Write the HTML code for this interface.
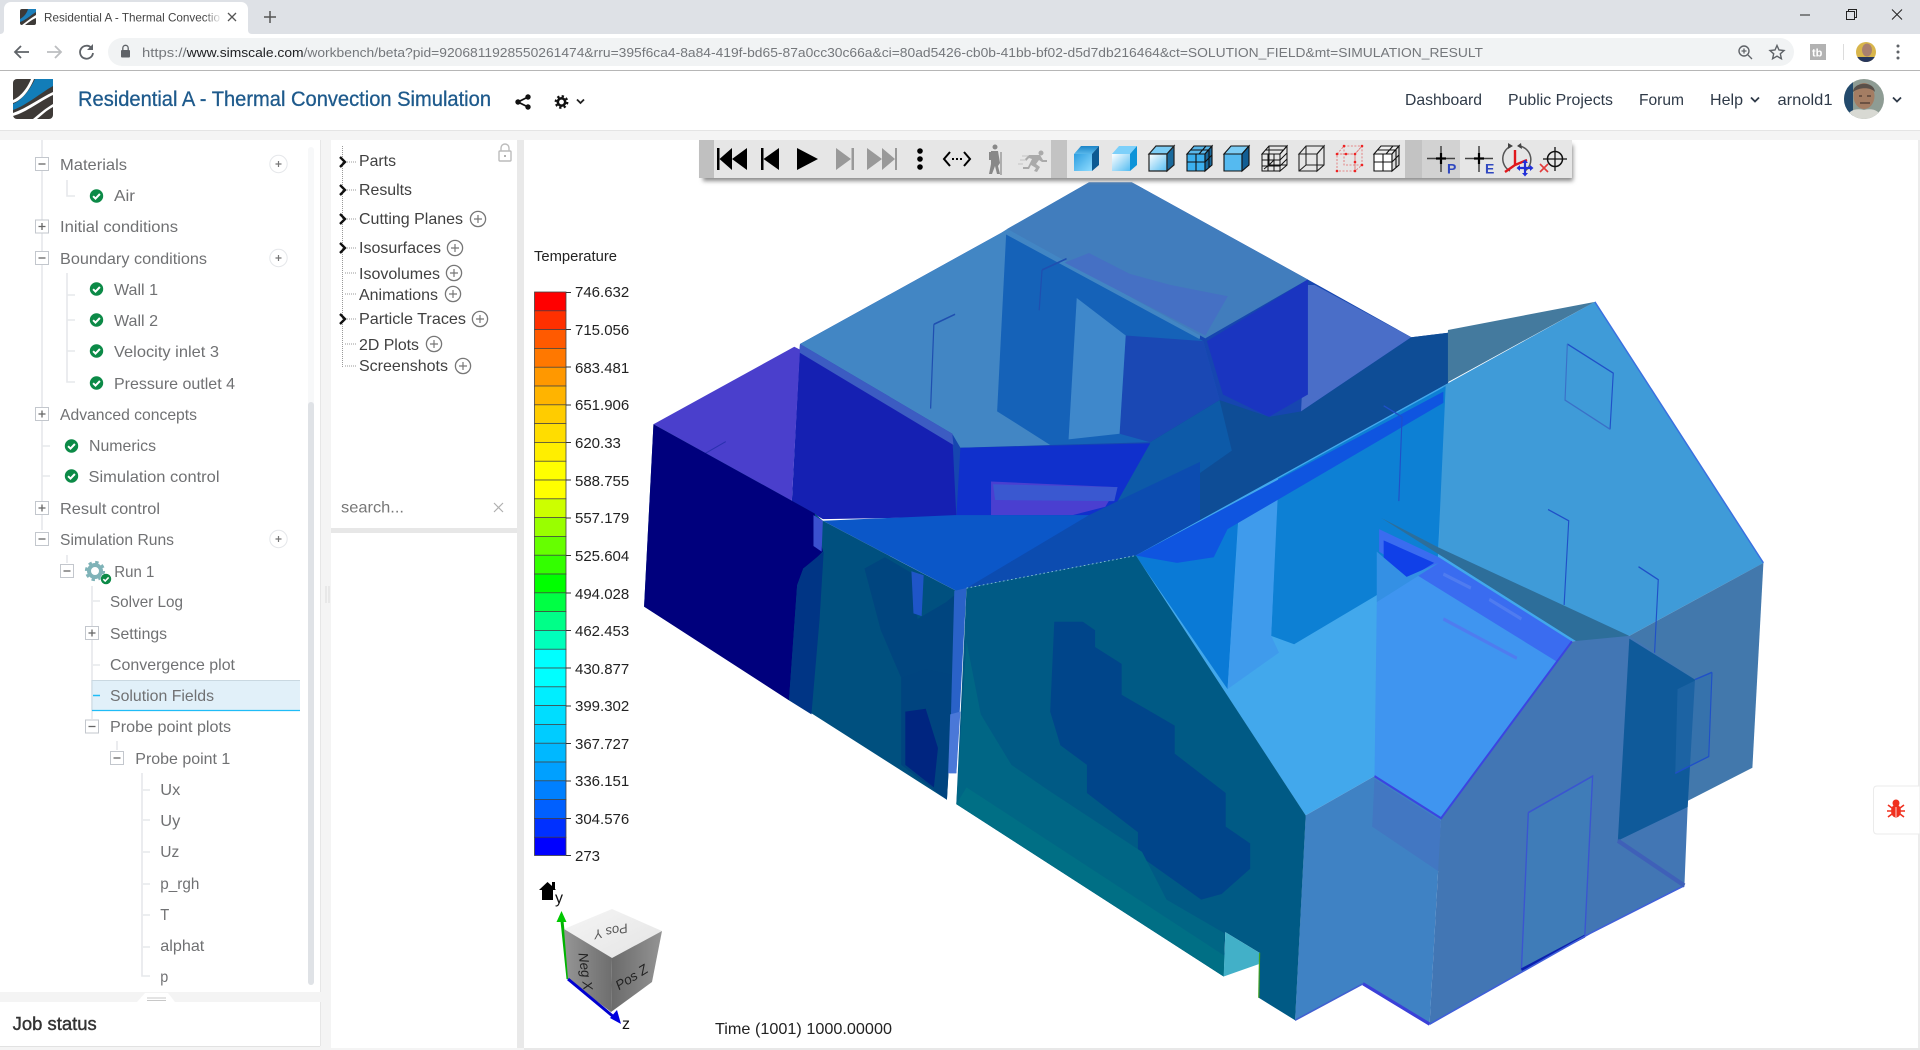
<!DOCTYPE html>
<html lang="en"><head><meta charset="utf-8"><title>Residential A - Thermal Convection Simulation</title>
<style>html,body{margin:0;padding:0;background:#f4f4f4;overflow:hidden}svg{display:block}
text{font-family:"Liberation Sans",Arial,sans-serif}
.t{font-size:16px;fill:#707173}.m{font-size:16px;fill:#404040}.l{font-size:15px;fill:#222}.n{font-size:16px;fill:#2f3a48}
</style></head><body>
<svg width="1920" height="1050" viewBox="0 0 1920 1050" xmlns="http://www.w3.org/2000/svg">
<defs>
<g id="chk"><circle r="6.7" fill="#0c8a47"/><path d="M-3.4 0.2L-1 2.6L3.4-2" fill="none" stroke="#fff" stroke-width="2"/></g>
<g id="bm"><rect x="-6.5" y="-6.5" width="13" height="13" fill="#fff" stroke="#c3c7cd"/><path d="M-3.5 0H3.5" stroke="#666" stroke-width="1.3"/></g>
<g id="bp"><rect x="-6.5" y="-6.5" width="13" height="13" fill="#fff" stroke="#c3c7cd"/><path d="M-3.5 0H3.5M0-3.5V3.5" stroke="#666" stroke-width="1.3"/></g>
<g id="add"><circle r="8.7" fill="#fff" stroke="#e5e7ea"/><path d="M-3 0H3M0-3V3" stroke="#777" stroke-width="1.2"/></g>
<g id="pl"><circle r="7.6" fill="#fff" stroke="#777" stroke-width="1.3"/><path d="M-4 0H4M0-4V4" stroke="#777" stroke-width="1.2"/></g>
<path id="chev" d="M-3-5L2 0L-3 5" fill="none" stroke="#111" stroke-width="2.4"/>
<linearGradient id="cb" x1="0" y1="0" x2="1" y2="1"><stop offset="0" stop-color="#2d9ee0"/><stop offset="1" stop-color="#8fdcff"/></linearGradient>
<linearGradient id="cw" x1="0" y1="0" x2="1" y2="1"><stop offset="0" stop-color="#fff"/><stop offset="1" stop-color="#55bdf2"/></linearGradient>
<linearGradient id="top" x1="0" y1="0" x2="0" y2="1"><stop offset="0" stop-color="#1c85c8"/><stop offset="1" stop-color="#59b8ea"/></linearGradient>
<linearGradient id="fade" x1="0" x2="1"><stop offset="0" stop-color="#fff" stop-opacity="0"/><stop offset="1" stop-color="#fff"/></linearGradient>
<linearGradient id="ctop" x1="0" y1="0" x2="1" y2="1"><stop offset="0" stop-color="#f5f5f5"/><stop offset="1" stop-color="#e4e4e4"/></linearGradient>
<linearGradient id="cl" x1="0" y1="0" x2="1" y2="0"><stop offset="0" stop-color="#959595"/><stop offset="1" stop-color="#6e6e6e"/></linearGradient>
<linearGradient id="cr" x1="0" y1="0" x2="1" y2="0"><stop offset="0" stop-color="#6a6a6a"/><stop offset="1" stop-color="#949494"/></linearGradient>
<filter id="bl" x="-5%" y="-30%" width="110%" height="160%"><feGaussianBlur stdDeviation="2"/></filter>
<clipPath id="av"><circle cx="1864" cy="99" r="20"/></clipPath>
<clipPath id="av2"><circle cx="1866" cy="52" r="10"/></clipPath>
</defs>

<rect width="1920" height="1050" fill="#f4f4f4"/>
<!-- browser chrome -->
<rect width="1920" height="34" fill="#dee1e6"/>
<path d="M0 34C3 34 4 32 4 30V9C4 5 7 2 11 2H241C245 2 248 5 248 9V30C248 32 249 34 252 34Z" fill="#fff"/>
<rect y="34" width="1920" height="36" fill="#fff"/>
<rect y="70" width="1920" height="1" fill="#b6b6b6"/>
<rect x="20" y="9" width="16" height="16" rx="2" fill="#3d3a38"/><path d="M28 9H36V12C31 15 26 20 20 22V19C24 17 27 13 28 9Z" fill="#1c7fbb"/><path d="M36 15C31 18 26 22 22 25H25C29 22 33 19 36 18Z" fill="#fff"/>
<text x="44" y="21.5" font-size="12" fill="#444" textLength="176" lengthAdjust="spacingAndGlyphs">Residential A - Thermal Convectio</text>
<rect x="204" y="8" width="18" height="18" fill="url(#fade)"/>
<path d="M228 13L236 21M236 13L228 21" stroke="#555" stroke-width="1.3"/>
<path d="M264 17H276M270 11V23" stroke="#555" stroke-width="1.5"/>
<path d="M15 52H29M21 46L15 52L21 58" fill="none" stroke="#5f6368" stroke-width="1.8"/>
<path d="M47 52H61M55 46L61 52L55 58" fill="none" stroke="#bcbec0" stroke-width="1.8"/>
<path d="M91.500 48A6.500 6.500 0 1 0 93 53" fill="none" stroke="#5f6368" stroke-width="1.8"/><path d="M93 44V50H87Z" fill="#5f6368"/>
<rect x="108" y="38" width="1686" height="28" rx="14" fill="#f1f3f4"/>
<rect x="121" y="50" width="9" height="7.500" rx="1" fill="#5f6368"/><path d="M122.800 50V48A2.700 2.700 0 0 1 128.200 48V50" fill="none" stroke="#5f6368" stroke-width="1.300"/>
<text x="142" y="57" font-size="13" fill="#74777b" textLength="44.600" lengthAdjust="spacingAndGlyphs">https://</text>
<text x="186.600" y="57" font-size="13" fill="#202124" textLength="117" lengthAdjust="spacingAndGlyphs">www.simscale.com</text>
<text x="303.500" y="57" font-size="13" fill="#74777b" textLength="1179.500" lengthAdjust="spacingAndGlyphs">/workbench/beta?pid=9206811928550261474&amp;rru=395f6ca4-8a84-419f-bd65-87a0cc30c66a&amp;ci=80ad5426-cb0b-41bb-bf02-d5d7db216464&amp;ct=SOLUTION_FIELD&amp;mt=SIMULATION_RESULT</text>
<circle cx="1744" cy="51" r="5" fill="none" stroke="#5f6368" stroke-width="1.400"/><path d="M1748 55L1752 59M1741.500 51H1746.500M1744 48.500V53.500" stroke="#5f6368" stroke-width="1.300"/>
<path d="M1777 45.500L1779 50L1784 50.500L1780.300 53.800L1781.400 58.700L1777 56.200L1772.600 58.700L1773.700 53.800L1770 50.500L1775 50Z" fill="none" stroke="#5f6368" stroke-width="1.400"/>
<rect x="1810" y="44" width="16" height="16" fill="#b2b2b2"/><text x="1812" y="56.500" font-size="11" font-weight="bold" style="fill:#fff">tb</text>
<rect x="1843" y="44" width="1" height="16" fill="#dcdcdc"/>
<circle cx="1866" cy="52" r="10" fill="#d8b54b"/><g clip-path="url(#av2)"><ellipse cx="1867" cy="50" rx="5" ry="6.500" fill="#a98070"/><rect x="1857" y="57" width="20" height="6" fill="#26365c"/></g>
<circle cx="1898" cy="46" r="1.500" fill="#5f6368"/><circle cx="1898" cy="52" r="1.500" fill="#5f6368"/><circle cx="1898" cy="58" r="1.500" fill="#5f6368"/>
<path d="M1800 15H1810" stroke="#222" stroke-width="1"/>
<path d="M1846.500 11.500H1854.500V19.500H1846.500ZM1848.500 11.500V9.500H1856.500V17.500H1854.500" fill="none" stroke="#222"/>
<path d="M1892 9.500L1902 19.500M1902 9.500L1892 19.500" stroke="#222" stroke-width="1"/>

<!-- app header -->
<rect y="71" width="1920" height="59" fill="#fff"/><rect y="130" width="1920" height="1" fill="#e4e4e4"/>
<rect x="13" y="79" width="40" height="40" rx="4" fill="#3e3a37"/>
<path d="M35 79H53V86C42 92 27 105 13 110V104C22 100 30 90 35 79Z" fill="#127db8"/>
<path d="M31 79H34C29 91 22 100 13 103V100C20 97 27 89 31 79Z" fill="#fff"/>
<path d="M53 92V95C40 101 27 112 13 116V113C27 108 40 98 53 92Z" fill="#fff"/>
<path d="M53 104V107C47 110 42 115 37 119H33C39 114 46 108 53 104Z" fill="#fff"/>
<text x="78" y="106" font-size="21" fill="#1e5a8c" stroke="#1e5a8c" stroke-width=".3" textLength="413" lengthAdjust="spacingAndGlyphs">Residential A - Thermal Convection Simulation</text>
<path d="M528 97L518 102L528 107" fill="none" stroke="#111" stroke-width="1.800"/><circle cx="528" cy="97" r="2.700" fill="#111"/><circle cx="518" cy="102" r="2.700" fill="#111"/><circle cx="528" cy="107" r="2.700" fill="#111"/>
<g transform="translate(561.500 102)"><circle r="3.700" fill="none" stroke="#111" stroke-width="2.600"/><circle r="5.800" fill="none" stroke="#111" stroke-width="2.200" stroke-dasharray="2.300 2.250"/></g>
<path d="M577 99.500L580.500 103L584 99.500" fill="none" stroke="#222" stroke-width="1.800"/>
<text class="n" x="1405" y="105" textLength="77" lengthAdjust="spacingAndGlyphs">Dashboard</text>
<text class="n" x="1508" y="105" textLength="105" lengthAdjust="spacingAndGlyphs">Public Projects</text>
<text class="n" x="1639" y="105" textLength="45" lengthAdjust="spacingAndGlyphs">Forum</text>
<text class="n" x="1710" y="105" textLength="33" lengthAdjust="spacingAndGlyphs">Help</text>
<path d="M1751 97.500L1755 101.500L1759 97.500" fill="none" stroke="#2f3a48" stroke-width="1.800"/>
<text class="n" x="1777.500" y="105" textLength="55" lengthAdjust="spacingAndGlyphs">arnold1</text>
<circle cx="1864" cy="99" r="20" fill="#8e9c94"/>
<g clip-path="url(#av)"><rect x="1844" y="79" width="9" height="40" fill="#234a6c"/><ellipse cx="1864" cy="96" rx="10.500" ry="13" fill="#a47d63"/><path d="M1853 92C1853 82 1874 80 1875 92C1871 87 1859 87 1853 92Z" fill="#59504a"/><path d="M1859 96H1862M1867 96H1871M1860 103H1870" stroke="#4a3a30" stroke-width="1.300"/><path d="M1846 119C1848 110 1856 108 1864 110C1872 108 1880 110 1882 119Z" fill="#d8d9d3"/></g>
<path d="M1893 97.500L1897 101.500L1901 97.500" fill="none" stroke="#2f3a48" stroke-width="1.800"/>

<!-- left panel -->
<rect x="0" y="140" width="320" height="852" fill="#fff"/><rect x="320" y="140" width="1" height="852" fill="#e6e6e6"/>
<rect x="308" y="147" width="6" height="838" rx="3" fill="#f7f8f9"/><rect x="308" y="402" width="6" height="583" rx="3" fill="#dfe2e6"/>
<g stroke="#e6e8eb" stroke-width="1.600" fill="none">
<path d="M42 140V530"/><path d="M67 180V196H75"/><path d="M67 273V382H75M67 295H75M67 320H75M67 351H75"/>
<path d="M42 446H50M42 476H50"/><path d="M67 555V563"/><path d="M92 586V719M93 601H100M93 665H100"/>
<path d="M117 741V750"/><path d="M142 773V976H150M143 790H150M143 820H150M143 852H150M143 884H150M143 915H150M143 947H150"/>
</g>
<rect x="92" y="680" width="208" height="31" fill="#e1f0f9"/><path d="M92 680.500H300" stroke="#c9d8e1"/><path d="M92 680V711" stroke="#c9d8e1"/><path d="M92 710.500H300" stroke="#1fbcf7" stroke-width="1.200"/><path d="M93 695.500H100" stroke="#1fbcf7" stroke-width="1.500"/>
<use href="#bm" x="42" y="164"/><use href="#bp" x="42" y="226.500"/><use href="#bm" x="42" y="258"/><use href="#bp" x="42" y="414"/><use href="#bp" x="42" y="508"/><use href="#bm" x="42" y="539"/><use href="#bm" x="67" y="571"/><use href="#bp" x="92" y="633"/><use href="#bm" x="92" y="726.500"/><use href="#bm" x="117" y="758"/>
<use href="#add" x="278.500" y="164"/><use href="#add" x="278.500" y="258"/><use href="#add" x="278.500" y="539"/>
<use href="#chk" x="96.500" y="196"/><use href="#chk" x="96.500" y="289"/><use href="#chk" x="96.500" y="320"/><use href="#chk" x="96.500" y="351"/><use href="#chk" x="96.500" y="383"/><use href="#chk" x="71.500" y="446"/><use href="#chk" x="71.500" y="476"/>
<g transform="translate(95 571)"><circle r="6" fill="none" stroke="#7fb3b8" stroke-width="4"/><circle r="8.800" fill="none" stroke="#7fb3b8" stroke-width="2.600" stroke-dasharray="3.400 3.500"/></g>
<g transform="translate(106 579) scale(.78)"><circle r="7" fill="#fff"/><use href="#chk"/></g>
<text class="t" x="60" y="170" textLength="67" lengthAdjust="spacingAndGlyphs">Materials</text>
<text class="t" x="114" y="201" textLength="21" lengthAdjust="spacingAndGlyphs">Air</text>
<text class="t" x="60" y="232" textLength="118" lengthAdjust="spacingAndGlyphs">Initial conditions</text>
<text class="t" x="60" y="264" textLength="147" lengthAdjust="spacingAndGlyphs">Boundary conditions</text>
<text class="t" x="114" y="295" textLength="44" lengthAdjust="spacingAndGlyphs">Wall 1</text>
<text class="t" x="114" y="326" textLength="44" lengthAdjust="spacingAndGlyphs">Wall 2</text>
<text class="t" x="114" y="357" textLength="105" lengthAdjust="spacingAndGlyphs">Velocity inlet 3</text>
<text class="t" x="114" y="389" textLength="121" lengthAdjust="spacingAndGlyphs">Pressure outlet 4</text>
<text class="t" x="60" y="420" textLength="137" lengthAdjust="spacingAndGlyphs">Advanced concepts</text>
<text class="t" x="89" y="451" textLength="67" lengthAdjust="spacingAndGlyphs">Numerics</text>
<text class="t" x="88.500" y="482" textLength="131" lengthAdjust="spacingAndGlyphs">Simulation control</text>
<text class="t" x="60" y="514" textLength="100" lengthAdjust="spacingAndGlyphs">Result control</text>
<text class="t" x="60" y="545" textLength="114" lengthAdjust="spacingAndGlyphs">Simulation Runs</text>
<text class="t" x="114.300" y="577" textLength="40" lengthAdjust="spacingAndGlyphs">Run 1</text>
<text class="t" x="110" y="607" textLength="73" lengthAdjust="spacingAndGlyphs">Solver Log</text>
<text class="t" x="110" y="639" textLength="57" lengthAdjust="spacingAndGlyphs">Settings</text>
<text class="t" x="110" y="670" textLength="125" lengthAdjust="spacingAndGlyphs">Convergence plot</text>
<text class="t" x="110" y="701" textLength="104" lengthAdjust="spacingAndGlyphs">Solution Fields</text>
<text class="t" x="110" y="732" textLength="121" lengthAdjust="spacingAndGlyphs">Probe point plots</text>
<text class="t" x="135.300" y="764" textLength="95" lengthAdjust="spacingAndGlyphs">Probe point 1</text>
<text class="t" x="160.300" y="795" textLength="20" lengthAdjust="spacingAndGlyphs">Ux</text>
<text class="t" x="160.300" y="826" textLength="20" lengthAdjust="spacingAndGlyphs">Uy</text>
<text class="t" x="160.300" y="857" textLength="19" lengthAdjust="spacingAndGlyphs">Uz</text>
<text class="t" x="160.300" y="889" textLength="39" lengthAdjust="spacingAndGlyphs">p_rgh</text>
<text class="t" x="160.300" y="920" textLength="9" lengthAdjust="spacingAndGlyphs">T</text>
<text class="t" x="160.300" y="951" textLength="44" lengthAdjust="spacingAndGlyphs">alphat</text>
<text class="t" x="160.300" y="982" textLength="8" lengthAdjust="spacingAndGlyphs">p</text>
<path d="M137 1002L145 993H168L175 1002Z" fill="#fff"/><path d="M147 998H166M147 1000.500H166" stroke="#c8c8c8"/>
<rect x="0" y="1002" width="320" height="44" fill="#fff"/><rect x="320" y="1002" width="1" height="44" fill="#e6e6e6"/><rect y="1046" width="320" height="1" fill="#e2e2e2"/>
<text x="12.700" y="1030" font-size="18" fill="#333" stroke="#333" stroke-width=".4" textLength="84" lengthAdjust="spacingAndGlyphs">Job status</text>
<path d="M326 586V603M329 586V603" stroke="#dcdcdc"/>

<!-- middle panel -->
<rect x="331" y="140" width="186" height="388" fill="#fff"/><rect x="331" y="528" width="186" height="5" fill="#e7e7e7"/><rect x="331" y="533" width="186" height="515" fill="#fff"/>
<rect x="517" y="140" width="7" height="908" fill="#e9e9e9"/>
<path d="M342.500 146V367M345 162H356M345 190H356M345 219H356M345 248H356M345 273H356M345 294H356M345 319H356M345 344H356M345 366H356" stroke="#999" stroke-dasharray="1 1" fill="none"/>
<use href="#chev" x="343" y="162"/><use href="#chev" x="343" y="190"/><use href="#chev" x="343" y="219"/><use href="#chev" x="343" y="248"/><use href="#chev" x="343" y="319"/>
<text class="m" x="359" y="166" textLength="37" lengthAdjust="spacingAndGlyphs">Parts</text>
<text class="m" x="359" y="195" textLength="53" lengthAdjust="spacingAndGlyphs">Results</text>
<text class="m" x="359" y="224" textLength="104" lengthAdjust="spacingAndGlyphs">Cutting Planes</text>
<text class="m" x="359" y="253" textLength="82" lengthAdjust="spacingAndGlyphs">Isosurfaces</text>
<text class="m" x="359" y="279" textLength="81" lengthAdjust="spacingAndGlyphs">Isovolumes</text>
<text class="m" x="359" y="300" textLength="79" lengthAdjust="spacingAndGlyphs">Animations</text>
<text class="m" x="359" y="324" textLength="107" lengthAdjust="spacingAndGlyphs">Particle Traces</text>
<text class="m" x="359" y="350" textLength="60" lengthAdjust="spacingAndGlyphs">2D Plots</text>
<text class="m" x="359" y="371" textLength="89" lengthAdjust="spacingAndGlyphs">Screenshots</text>
<use href="#pl" x="478" y="219"/><use href="#pl" x="455" y="248"/><use href="#pl" x="454" y="273"/><use href="#pl" x="453" y="294"/><use href="#pl" x="480" y="319"/><use href="#pl" x="434" y="344"/><use href="#pl" x="463" y="366"/>
<rect x="499" y="151" width="12" height="10" rx="1" fill="none" stroke="#bcbcbc" stroke-width="1.400"/><path d="M501 151V148A4 4 0 0 1 509 148V151" fill="none" stroke="#bcbcbc" stroke-width="1.400"/><circle cx="505" cy="156" r="1" fill="#999"/>
<text x="341" y="512.500" font-size="16" fill="#777" textLength="63" lengthAdjust="spacingAndGlyphs">search...</text>
<path d="M494 503L503 512M503 503L494 512" stroke="#b0b0b0" stroke-width="1.200"/>

<!-- canvas -->
<rect x="524" y="140" width="1394" height="908" fill="#fff"/><rect x="1918" y="140" width="2" height="910" fill="#ececec"/><rect x="524" y="1048" width="1396" height="2" fill="#e8e8e8"/>

<!-- 3D model -->
<g transform="translate(640 170) scale(.40816 .56122)">
<polygon points="392,310 885,112 1100,22 1205,22 1636,195 1890,298 1980,290 1980,380 1215,687 800,745 770,620 765,470" fill="#1646b0"/>
<polygon points="392,310 885,112 900,105 1100,22 1205,22 1372,90 1372,300 1005,490 785,495 765,470" fill="#4286c4"/>
<polygon points="897,115 1380,305 1420,410 1250,485 1005,490 875,430" fill="#1562b8"/>
<polygon points="1190,295 1380,305 1420,410 1250,485 1175,470" fill="#1a48b4"/>
<polygon points="1070,228 1190,295 1175,470 1050,480" fill="#3f88cb"/>
<polygon points="900,105 1100,22 1205,22 1636,195 1385,300" fill="#417dbd"/>
<polygon points="1040,165 1100,148 1200,185 1300,205 1440,225 1385,295" fill="#4570c4"/>
<path d="M985 178L1045 158M985 178L978 250M720 275L772 257M720 275L712 425" stroke="#1f4fb0" stroke-width="3" fill="none"/>
<g transform="translate(1372 0) scale(1.125 1)">
<polygon points="235,205 250,205 460,298 220,430" fill="#4a6ec8"/>
<polygon points="15,305 235,195 235,400 150,440 50,400" fill="#1a35c0"/>
</g>
<polygon points="1980,290 1890,298 1620,430 1541,440 1420,410 1250,485 1170,590 800,745 1215,687 1372,625 1980,380" fill="#0e4d96"/>
<polygon points="1250,485 1420,410 1450,500 1372,540 1170,590" fill="#0d5aa8"/>
<polygon points="1100,615 1170,590 1372,520 1372,625 1215,687 800,745" fill="#0c4cb0"/>
<polygon points="785,495 1250,487 1170,590 1100,615 775,618" fill="#1030cc"/>
<polygon points="860,555 1170,565 1140,600 1060,615 860,615" fill="#4a3fd0"/>
<polygon points="865,560 1170,565 1162,590 870,588" fill="#3a58d0"/>
<polygon points="392,310 765,470 775,618 448,622 372,590" fill="#1520b2"/>
<polygon points="392,310 765,470 768,490 390,325" fill="#3c5cc2"/>
<polygon points="33,453 378,315 392,320 372,590" fill="#4a3fcc"/>
<path d="M160 505L210 484" stroke="#2a30b0" stroke-width="2"/>
<polygon points="448,625 770,615 1100,615 800,745 780,752" fill="#0b57c8"/>
<g transform="translate(1372 0) scale(1.125 1)">
<polygon points="-140,687 540,380 860,235 1227,700 930,830 810,840 525,1155 380,1080 230,1150" fill="#42a8ec"/>
<polygon points="530,385 860,235 1227,700 935,830 520,680" fill="#3f9bd8"/>
<polygon points="540,285 860,235 540,378" fill="#447a9e"/>
<polygon points="170,550 535,385 518,690 380,760 205,845 155,830" fill="#0d80d4"/>
<polygon points="-140,687 85,600 60,925" fill="#0a7ad6"/>
<polygon points="85,610 170,570 155,830 172,860 60,925" fill="#3f9bec"/>
<polygon points="-140,687 530,395 530,415 60,640 30,690 -50,700" fill="#0f55e0"/>
<polygon points="385,770 520,690 810,840 525,1155 380,1080" fill="#3f95f0"/>
<polygon points="390,640 520,690 810,840 785,880 390,680" fill="#3a6cf0"/>
<polygon points="400,660 510,700 450,730 400,700" fill="#1040e8"/>
<polygon points="385,680 450,725 520,700 385,770" fill="#3490e4"/>
<path d="M530 800L690 870M630 765L700 800M530 720L590 745" stroke="#4f7cf0" stroke-width="6" fill="none"/>
<polygon points="395,620 518,672 935,830 935,880 820,840" fill="#2d6e9a"/>
<polygon points="935,830 1227,700 1203,1065 1060,1125" fill="#4278ac"/>
<polygon points="230,1150 380,1080 525,1155 500,1522 355,1450 207,1515" fill="#3f82c4"/>
<polygon points="380,1085 525,1160 520,1250 375,1170" fill="#4277c2"/>
<polygon points="525,1155 810,840 935,830 1078,908 1062,1135 1055,1275 850,1360 500,1522" fill="#4276b4"/>
<polygon points="715,1145 855,1080 838,1365 700,1425" fill="#3f7cb8"/>
<polygon points="935,835 1078,908 1062,1135 910,1195" fill="#0f5a9a"/>
<polygon points="1040,925 1115,895 1108,1045 1035,1075" fill="#2a6cac" opacity=".5"/>
<path d="M715 1145L855 1080L838 1365M715 1145L700 1425" stroke="#3a55d0" stroke-width="3" fill="none"/>
<path d="M700 1425L838 1365" stroke="#0a20b0" stroke-width="5"/>
<path d="M355 1450L500 1522" stroke="#3a40d8" stroke-width="6"/>
<path d="M500 1522L850 1360L1055 1275" stroke="#3f5fd8" stroke-width="3" fill="none"/>
<path d="M207 1515L355 1450" stroke="#4060d0" stroke-width="3"/>
<path d="M860 235L1227 700" stroke="#3a70e0" stroke-width="3"/>
<path d="M380 1080L525 1155L810 840" stroke="#3b45e0" stroke-width="4" fill="none"/>
<path d="M800 310L900 362L893 462M955 707L998 730L990 860M758 605L803 625L793 775M1115 895L1108 1045L1035 1075M1115 895L1078 908M400 420L440 440L433 590" stroke="#1f50c8" stroke-width="2.500" fill="none"/>
<path d="M800 310L795 410L893 462" stroke="#3a70c8" stroke-width="2.500" fill="none"/>
<path d="M910 1195L1055 1275" stroke="#3f60b8" stroke-width="8"/>
</g>
<polygon points="33,453 428,612 448,625 670,710 780,752 752,1122 10,778" fill="#00507f"/>
<polygon points="33,453 428,612 448,680 420,700 400,710 385,740 365,945 10,778" fill="#00007d"/>
<polygon points="385,740 400,710 450,680 440,800 420,970 365,945" fill="#003585"/>
<polygon points="550,710 600,690 670,720 680,800 750,770 780,752 770,900 640,905 590,820" fill="#00457f"/>
<polygon points="640,905 700,890 770,900 752,1122 640,1060" fill="#00447f"/>
<polygon points="650,965 700,960 730,1030 720,1100 650,1060" fill="#002580"/>
<polygon points="665,715 695,722 690,795 670,790" fill="#1f55c8"/>
<polygon points="425,615 448,625 445,680 425,670" fill="#3a50d0"/>
<polygon points="770,750 800,745 775,1075 758,1075" fill="#2a62c8"/>
<polygon points="760,970 785,965 775,1075 755,1075" fill="#4a78d8"/>
<polygon points="800,745 1215,687 1631,1150 1605,1515 1516,1475 1518,1395 1434,1358 1430,1437 775,1130" fill="#005a85"/>
<polygon points="1015,805 1085,805 1115,820 1115,850 1180,880 1180,935 1310,990 1310,1040 1435,1110 1435,1170 1495,1200 1495,1245 1425,1290 1375,1300 1220,1220 1220,1180 1095,1110 1095,1060 1030,1025 1005,965" fill="#00458a"/>
<polygon points="775,1130 800,840 835,970 910,1060 1000,1105 1230,1215 1290,1300 1432,1360 1430,1437" fill="#006685"/>
<polygon points="775,1130 800,1100 1432,1400 1430,1437" fill="#006f85"/>
<polygon points="1434,1358 1518,1395 1516,1415 1430,1437" fill="#42b0c8"/>
<path d="M1518 1395L1516 1475" stroke="#40a020" stroke-width="3"/>
<path d="M800 745L1215 687" stroke="#8fc9d8" stroke-width="1.500" stroke-dasharray="4 6"/>
</g>

<!-- toolbar -->
<rect x="703" y="145" width="870" height="36" fill="#8a8a8a" filter="url(#bl)"/>
<rect x="699" y="140" width="16" height="38" fill="#c0c0c0"/><rect x="714" y="140" width="337" height="38" fill="#e6e6e6"/>
<rect x="1051" y="140" width="16" height="38" fill="#c3c3c3"/><rect x="1067" y="140" width="338" height="38" fill="#e6e6e6"/>
<rect x="1405" y="140" width="17" height="38" fill="#c3c3c3"/><rect x="1422" y="140" width="38" height="38" fill="#d2d2d2"/><rect x="1460" y="140" width="112" height="38" fill="#e6e6e6"/>
<path d="M717 148H719.500V170H717ZM732 148V170L719.500 159ZM747 148V170L732 159Z" fill="#000"/>
<path d="M761 148H763.500V170H761ZM779 148V170L763.500 159Z" fill="#000"/>
<path d="M797 148V170L818 159Z" fill="#000"/>
<path d="M836 148V170L851 159ZM851.500 148H854V170H851.500Z" fill="#999"/>
<path d="M867 148V170L882 159ZM882 148V170L895 159ZM895 148H897V170H895Z" fill="#999"/>
<circle cx="920" cy="151" r="2.800" fill="#000"/><circle cx="920" cy="159" r="2.800" fill="#000"/><circle cx="920" cy="167" r="2.800" fill="#000"/>
<path d="M950 152L944 159L950 166M964 152L970 159L964 166" fill="none" stroke="#000" stroke-width="2"/><path d="M952 159H962" stroke="#000" stroke-width="2" stroke-dasharray="2 2"/>
<circle cx="995" cy="147" r="2.500" fill="#888"/>
<path d="M991 151H998L1000 163L998 166L1000 174H997L995 166L992 174H989L991 164ZM989 152H992V160H989Z" fill="#888"/><path d="M1001 152V175" stroke="#888" stroke-width="1.200"/>
<circle cx="1041" cy="153" r="2.500" fill="#aaa"/>
<path d="M1034 155H1040L1043 160H1047V162H1042L1039 160L1036 164L1040 167L1037 172L1034 171L1036 168L1031 165L1029 169H1023V167H1028L1032 159L1029 158L1026 161L1025 159L1029 155Z" fill="#aaa"/><path d="M1022 156H1028M1020 160H1025M1018 164H1023" stroke="#c4c4c4"/>
<!-- cubes -->
<g transform="translate(1073 145)"><polygon points="1,9 8,1 26,1 19,9" fill="url(#top)"/><polygon points="1,9 19,9 19,26 1,26" fill="url(#cb)"/><polygon points="19,9 26,1 26,20 19,26" fill="#0d5a92"/></g>
<g transform="translate(1111 145)"><polygon points="1,9 8,1 26,1 19,9" fill="#7dd0fa"/><polygon points="1,9 19,9 19,26 1,26" fill="url(#cw)"/><polygon points="19,9 26,1 26,20 19,26" fill="#0d93d8"/></g>
<g transform="translate(1148 145)" stroke="#222" stroke-width="1.200"><polygon points="1,9 8,1 26,1 19,9" fill="#7dcdf5"/><polygon points="1,9 19,9 19,26 1,26" fill="url(#cw)"/><polygon points="19,9 26,1 26,20 19,26" fill="#1a6a9c"/></g>
<g transform="translate(1186 145)" stroke="#111" stroke-width="1.100"><polygon points="1,9 8,1 26,1 19,9" fill="#5ab8ea"/><polygon points="1,9 19,9 19,26 1,26" fill="#3cb0ee"/><polygon points="19,9 26,1 26,20 19,26" fill="#1a6a9c"/><path d="M10 9V26M1 17H19M4.500 5H22.500M13 9L20 1M23 5V23M19 17L26 10" fill="none"/></g>
<g transform="translate(1223 145)" stroke="#111" stroke-width="1.100"><polygon points="1,9 8,1 26,1 19,9" fill="#7dcdf5"/><polygon points="1,9 19,9 19,26 1,26" fill="#55baf0"/><polygon points="19,9 26,1 26,20 19,26" fill="#125e94"/></g>
<g transform="translate(1261 145)" stroke="#111" stroke-width="1" fill="none"><polygon points="1,9 8,1 26,1 19,9"/><polygon points="1,9 19,9 19,26 1,26"/><polygon points="19,9 26,1 26,20 19,26"/><path d="M7 9V26M13 9V26M1 15H19M1 21H19M4 5H22M19 15L26 8M19 21L26 14M8 1V20H26M3 24L8 20M13 15L8 20"/></g>
<g transform="translate(1298 145)" stroke="#222" stroke-width="1.100" fill="none"><polygon points="1,9 8,1 26,1 19,9"/><polygon points="1,9 19,9 19,26 1,26"/><polygon points="19,9 26,1 26,20 19,26"/><path d="M8 1V20H26M1 26L8 20"/></g>
<g transform="translate(1336 145)" stroke="#e36a6a" stroke-width=".8" fill="none" stroke-dasharray="2 1.500"><polygon points="1,9 8,1 26,1 19,9"/><polygon points="1,9 19,9 19,26 1,26"/><polygon points="19,9 26,1 26,20 19,26"/><path d="M8 1V20H26"/><g fill="#e22" stroke="none"><circle cx="1" cy="9" r="1.300"/><circle cx="8" cy="1" r="1.300"/><circle cx="26" cy="1" r="1.300"/><circle cx="19" cy="9" r="1.300"/><circle cx="1" cy="26" r="1.300"/><circle cx="19" cy="26" r="1.300"/><circle cx="26" cy="20" r="1.300"/><circle cx="10" cy="9" r="1.300"/><circle cx="19" cy="17" r="1.300"/></g></g>
<g transform="translate(1373 145)" stroke="#111" stroke-width="1.100"><polygon points="1,9 8,1 26,1 19,9" fill="#eee"/><polygon points="1,9 19,9 19,26 1,26" fill="#fff"/><polygon points="19,9 26,1 26,20 19,26" fill="#ddd"/><path d="M10 9V26M1 17H19M4.500 5H22.500M13 9L20 1M23 5V23M19 17L26 10" fill="none"/></g>
<path d="M1427 158.500H1455M1441 146V172" stroke="#444" stroke-width="1.500"/><path d="M1436 158.500H1446M1441 153V164" stroke="#000" stroke-width="2.200"/>
<text x="1447" y="173.500" font-size="14" font-weight="bold" style="fill:#3048c0">P</text>
<path d="M1465 158.500H1493M1479 146V172" stroke="#444" stroke-width="1.500"/><path d="M1474 158.500H1484M1479 153V164" stroke="#000" stroke-width="2.200"/>
<text x="1485" y="173.500" font-size="14" font-weight="bold" style="fill:#3048c0">E</text>
<path d="M1511 146A14 14 0 0 0 1510 171M1520 146A14 14 0 0 1 1525 171" fill="none" stroke="#555" stroke-width="1.500"/>
<path d="M1508 143L1513 146L1508 149ZM1521 143L1517 146L1522 149Z" fill="#444"/>
<path d="M1515 150V165L1505 172M1515 165L1527 160" fill="none" stroke="#e0181c" stroke-width="2.400"/>
<path d="M1519 168H1531M1525 162V174" stroke="#2230d8" stroke-width="2.200"/><path d="M1522 163L1525 159.500L1528 163ZM1522 173L1525 176.500L1528 173ZM1520 165L1516.500 168L1520 171ZM1530 165L1533.500 168L1530 171Z" fill="#2230d8"/>
<circle cx="1555" cy="159" r="7.500" fill="none" stroke="#111" stroke-width="1.500"/><path d="M1543 159H1567M1555 147V171" stroke="#111" stroke-width="1.300"/>
<path d="M1540 164L1548 172M1548 164L1540 172" stroke="#e23a3a" stroke-width="1.600"/>

<!-- legend -->
<text x="534" y="261" font-size="15" fill="#222" textLength="83" lengthAdjust="spacingAndGlyphs">Temperature</text>
<g stroke="#444" stroke-width=".8">
<rect x="534.500" y="292" width="31.500" height="19" fill="#ff0000"/><rect x="534.500" y="310.800" width="31.500" height="19" fill="#ff3000"/><rect x="534.500" y="329.600" width="31.500" height="19" fill="#ff5a00"/><rect x="534.500" y="348.400" width="31.500" height="19" fill="#ff7800"/><rect x="534.500" y="367.200" width="31.500" height="19" fill="#ff9800"/><rect x="534.500" y="386" width="31.500" height="19" fill="#ffb400"/><rect x="534.500" y="404.800" width="31.500" height="19" fill="#ffcc00"/><rect x="534.500" y="423.600" width="31.500" height="19" fill="#ffdd00"/><rect x="534.500" y="442.400" width="31.500" height="19" fill="#ffee00"/><rect x="534.500" y="461.200" width="31.500" height="19" fill="#ffff00"/>
<rect x="534.500" y="480" width="31.500" height="19" fill="#ffff00"/><rect x="534.500" y="498.800" width="31.500" height="19" fill="#ccff00"/><rect x="534.500" y="517.600" width="31.500" height="19" fill="#99ff00"/><rect x="534.500" y="536.400" width="31.500" height="19" fill="#66ff00"/><rect x="534.500" y="555.200" width="31.500" height="19" fill="#33ff00"/><rect x="534.500" y="574" width="31.500" height="19" fill="#00ff00"/><rect x="534.500" y="592.800" width="31.500" height="19" fill="#00ff44"/><rect x="534.500" y="611.600" width="31.500" height="19" fill="#00ff88"/><rect x="534.500" y="630.400" width="31.500" height="19" fill="#00ffbb"/><rect x="534.500" y="649.200" width="31.500" height="19" fill="#00ffff"/>
<rect x="534.500" y="668" width="31.500" height="19" fill="#00ffff"/><rect x="534.500" y="686.800" width="31.500" height="19" fill="#00eeff"/><rect x="534.500" y="705.600" width="31.500" height="19" fill="#00ddff"/><rect x="534.500" y="724.400" width="31.500" height="19" fill="#00ccff"/><rect x="534.500" y="743.200" width="31.500" height="19" fill="#00b8ff"/><rect x="534.500" y="762" width="31.500" height="19" fill="#00a0ff"/><rect x="534.500" y="780.800" width="31.500" height="19" fill="#0080ff"/><rect x="534.500" y="799.600" width="31.500" height="19" fill="#0060ff"/><rect x="534.500" y="818.400" width="31.500" height="19" fill="#0030ff"/><rect x="534.500" y="837.200" width="31.500" height="18.300" fill="#0000ff"/>
</g>
<path d="M566 292.500H571M566 329.500H571M566 367H571M566 405H571M566 442.500H571M566 480H571M566 518H571M566 555.500H571M566 593H571M566 630.500H571M566 668H571M566 706H571M566 743.500H571M566 781H571M566 818.500H571M566 855.500H571" stroke="#333"/>
<g>
<text class="l" x="575" y="297">746.632</text><text class="l" x="575" y="335">715.056</text><text class="l" x="575" y="373">683.481</text><text class="l" x="575" y="410">651.906</text><text class="l" x="575" y="448">620.33</text><text class="l" x="575" y="486">588.755</text><text class="l" x="575" y="523">557.179</text><text class="l" x="575" y="561">525.604</text><text class="l" x="575" y="599">494.028</text><text class="l" x="575" y="636">462.453</text><text class="l" x="575" y="674">430.877</text><text class="l" x="575" y="711">399.302</text><text class="l" x="575" y="749">367.727</text><text class="l" x="575" y="786">336.151</text><text class="l" x="575" y="824">304.576</text><text class="l" x="575" y="861">273</text>
</g>

<!-- orientation cube -->
<path d="M547.500 882L552 886V882H555V889L556 890H553V900H542V890H539Z" fill="#000"/>
<text x="555" y="903" font-size="16" fill="#111">y</text>
<path d="M568 979L562 921" stroke="#00b400" stroke-width="3"/><polygon points="561.500,911 556.500,922 566.500,922" fill="#00c800"/>
<polygon points="564,929 612,909 662,931 612,958" fill="url(#ctop)"/>
<polygon points="564,929 612,958 611,1012 568,979" fill="url(#cl)"/>
<polygon points="612,958 662,931 652,982 611,1012" fill="url(#cr)"/>
<path d="M568 979L615 1018" stroke="#0000d0" stroke-width="3"/><polygon points="621,1024 610,1018 617,1010" fill="#0000e0"/>
<text x="622" y="1029" font-size="16" fill="#111">z</text>
<text transform="translate(610 927) rotate(168)" text-anchor="middle" font-size="13" fill="#555" font-style="italic">Pos Y</text>
<text transform="translate(581 972) rotate(82)" text-anchor="middle" font-size="13.500" fill="#222" font-style="italic">Neg X</text>
<text transform="translate(634 981) rotate(-32)" text-anchor="middle" font-size="13.500" fill="#222" font-style="italic">Pos Z</text>
<text x="715" y="1034" font-size="16" fill="#222" textLength="177" lengthAdjust="spacingAndGlyphs">Time (1001) 1000.00000</text>

<!-- bug tab -->
<path d="M1920 786H1877Q1873.500 786 1873.500 790V830Q1873.500 834 1877 834H1920Z" fill="#fff" stroke="#ebebeb"/>
<ellipse cx="1896" cy="811" rx="5" ry="6.500" fill="#f0301f"/><circle cx="1896" cy="803" r="3.500" fill="#f0301f"/>
<path d="M1896 804V817M1888 805L1892 808M1904 805L1900 808M1887 811H1891M1901 811H1905M1888 817L1892 814M1904 817L1900 814" stroke="#f0301f" stroke-width="1.600"/><path d="M1896 807V817" stroke="#fff" stroke-width=".8"/>
</svg>
</body></html>
